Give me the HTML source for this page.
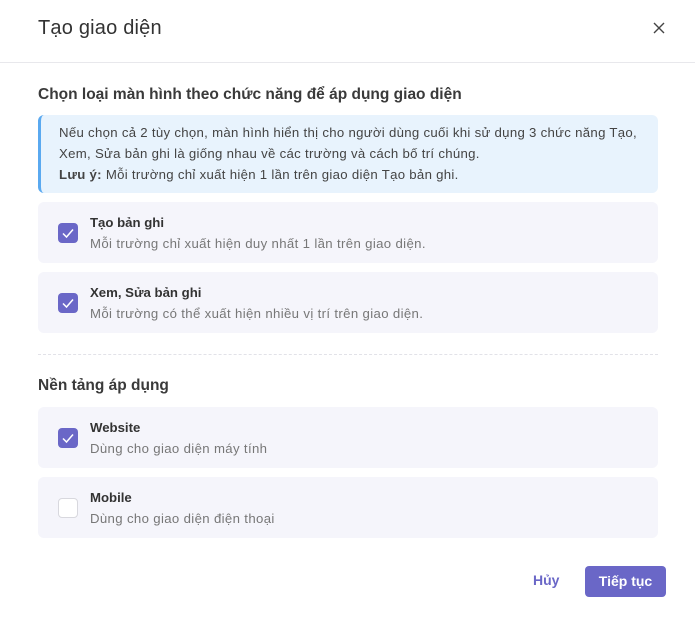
<!DOCTYPE html>
<html><head><meta charset="utf-8"><style>
*{box-sizing:border-box;margin:0;padding:0}
body{width:695px;height:618px;background:#fff;font-family:"Liberation Sans",sans-serif;color:#333;position:relative;overflow:hidden}
.abs{position:absolute}
.title{left:38px;top:17px;font-size:20px;color:#333;letter-spacing:0.2px}
.close{left:651px;top:20px;width:16px;height:16px}
.hr{left:0;top:62px;width:695px;height:1px;background:#e8e8ec}
.h{left:38px;font-size:15.5px;font-weight:bold;color:#3a3a3a}
.info{left:38px;top:115px;width:620px;height:78px;background:#e8f3fd;border-left:3px solid #5aa9f0;border-radius:6px;padding:7px 0 0 18px;font-size:13.2px;line-height:21px;color:#444;letter-spacing:0.3px}
.card{left:38px;width:620px;height:61px;background:#f5f5fb;border-radius:6px}
.cb{position:absolute;left:20px;top:21px;width:20px;height:20px;border-radius:4px;background:#6a67c7}
.cb.off{background:#fff;border:1px solid #d8d8de}
.ct{position:absolute;left:52px;top:13px;font-size:13.2px;font-weight:bold;color:#333}
.cd{position:absolute;left:52px;top:34px;font-size:13.2px;color:#777;letter-spacing:0.35px}
.dash{left:38px;top:354px;width:620px;border-top:1px dashed #e2e2e8}
.cancel{left:533px;top:572px;font-size:14px;font-weight:bold;color:#6a67c7}
.btn{left:585px;top:566px;width:81px;height:31px;background:#6a67c7;border-radius:4px;color:#fff;font-size:14px;font-weight:bold;text-align:center;line-height:31px}
</style></head><body>
<div class="abs title">Tạo giao diện</div>
<svg class="abs close" viewBox="0 0 16 16"><path d="M3 3L13 13M13 3L3 13" stroke="#444" stroke-width="1.4"/></svg>
<div class="abs hr"></div>
<div class="abs h" style="top:86px">Chọn loại màn hình theo chức năng để áp dụng giao diện</div>
<div class="abs info">Nếu chọn cả 2 tùy chọn, màn hình hiển thị cho người dùng cuối khi sử dụng 3 chức năng Tạo,<br>Xem, Sửa bản ghi là giống nhau về các trường và cách bố trí chúng.<br><b>Lưu ý:</b> Mỗi trường chỉ xuất hiện 1 lần trên giao diện Tạo bản ghi.</div>
<div class="abs card" style="top:202px"><div class="cb"><svg viewBox="0 0 20 20" width="20" height="20"><path d="M5 10.5L8.5 14L15 6.5" fill="none" stroke="#fff" stroke-width="1.5"/></svg></div><div class="ct">Tạo bản ghi</div><div class="cd">Mỗi trường chỉ xuất hiện duy nhất 1 lần trên giao diện.</div></div>
<div class="abs card" style="top:272px"><div class="cb"><svg viewBox="0 0 20 20" width="20" height="20"><path d="M5 10.5L8.5 14L15 6.5" fill="none" stroke="#fff" stroke-width="1.5"/></svg></div><div class="ct">Xem, Sửa bản ghi</div><div class="cd">Mỗi trường có thể xuất hiện nhiều vị trí trên giao diện.</div></div>
<div class="abs dash"></div>
<div class="abs h" style="top:377px">Nền tảng áp dụng</div>
<div class="abs card" style="top:407px"><div class="cb"><svg viewBox="0 0 20 20" width="20" height="20"><path d="M5 10.5L8.5 14L15 6.5" fill="none" stroke="#fff" stroke-width="1.5"/></svg></div><div class="ct">Website</div><div class="cd">Dùng cho giao diện máy tính</div></div>
<div class="abs card" style="top:477px"><div class="cb off"></div><div class="ct">Mobile</div><div class="cd">Dùng cho giao diện điện thoại</div></div>
<div class="abs cancel">Hủy</div>
<div class="abs btn">Tiếp tục</div>
</body></html>
